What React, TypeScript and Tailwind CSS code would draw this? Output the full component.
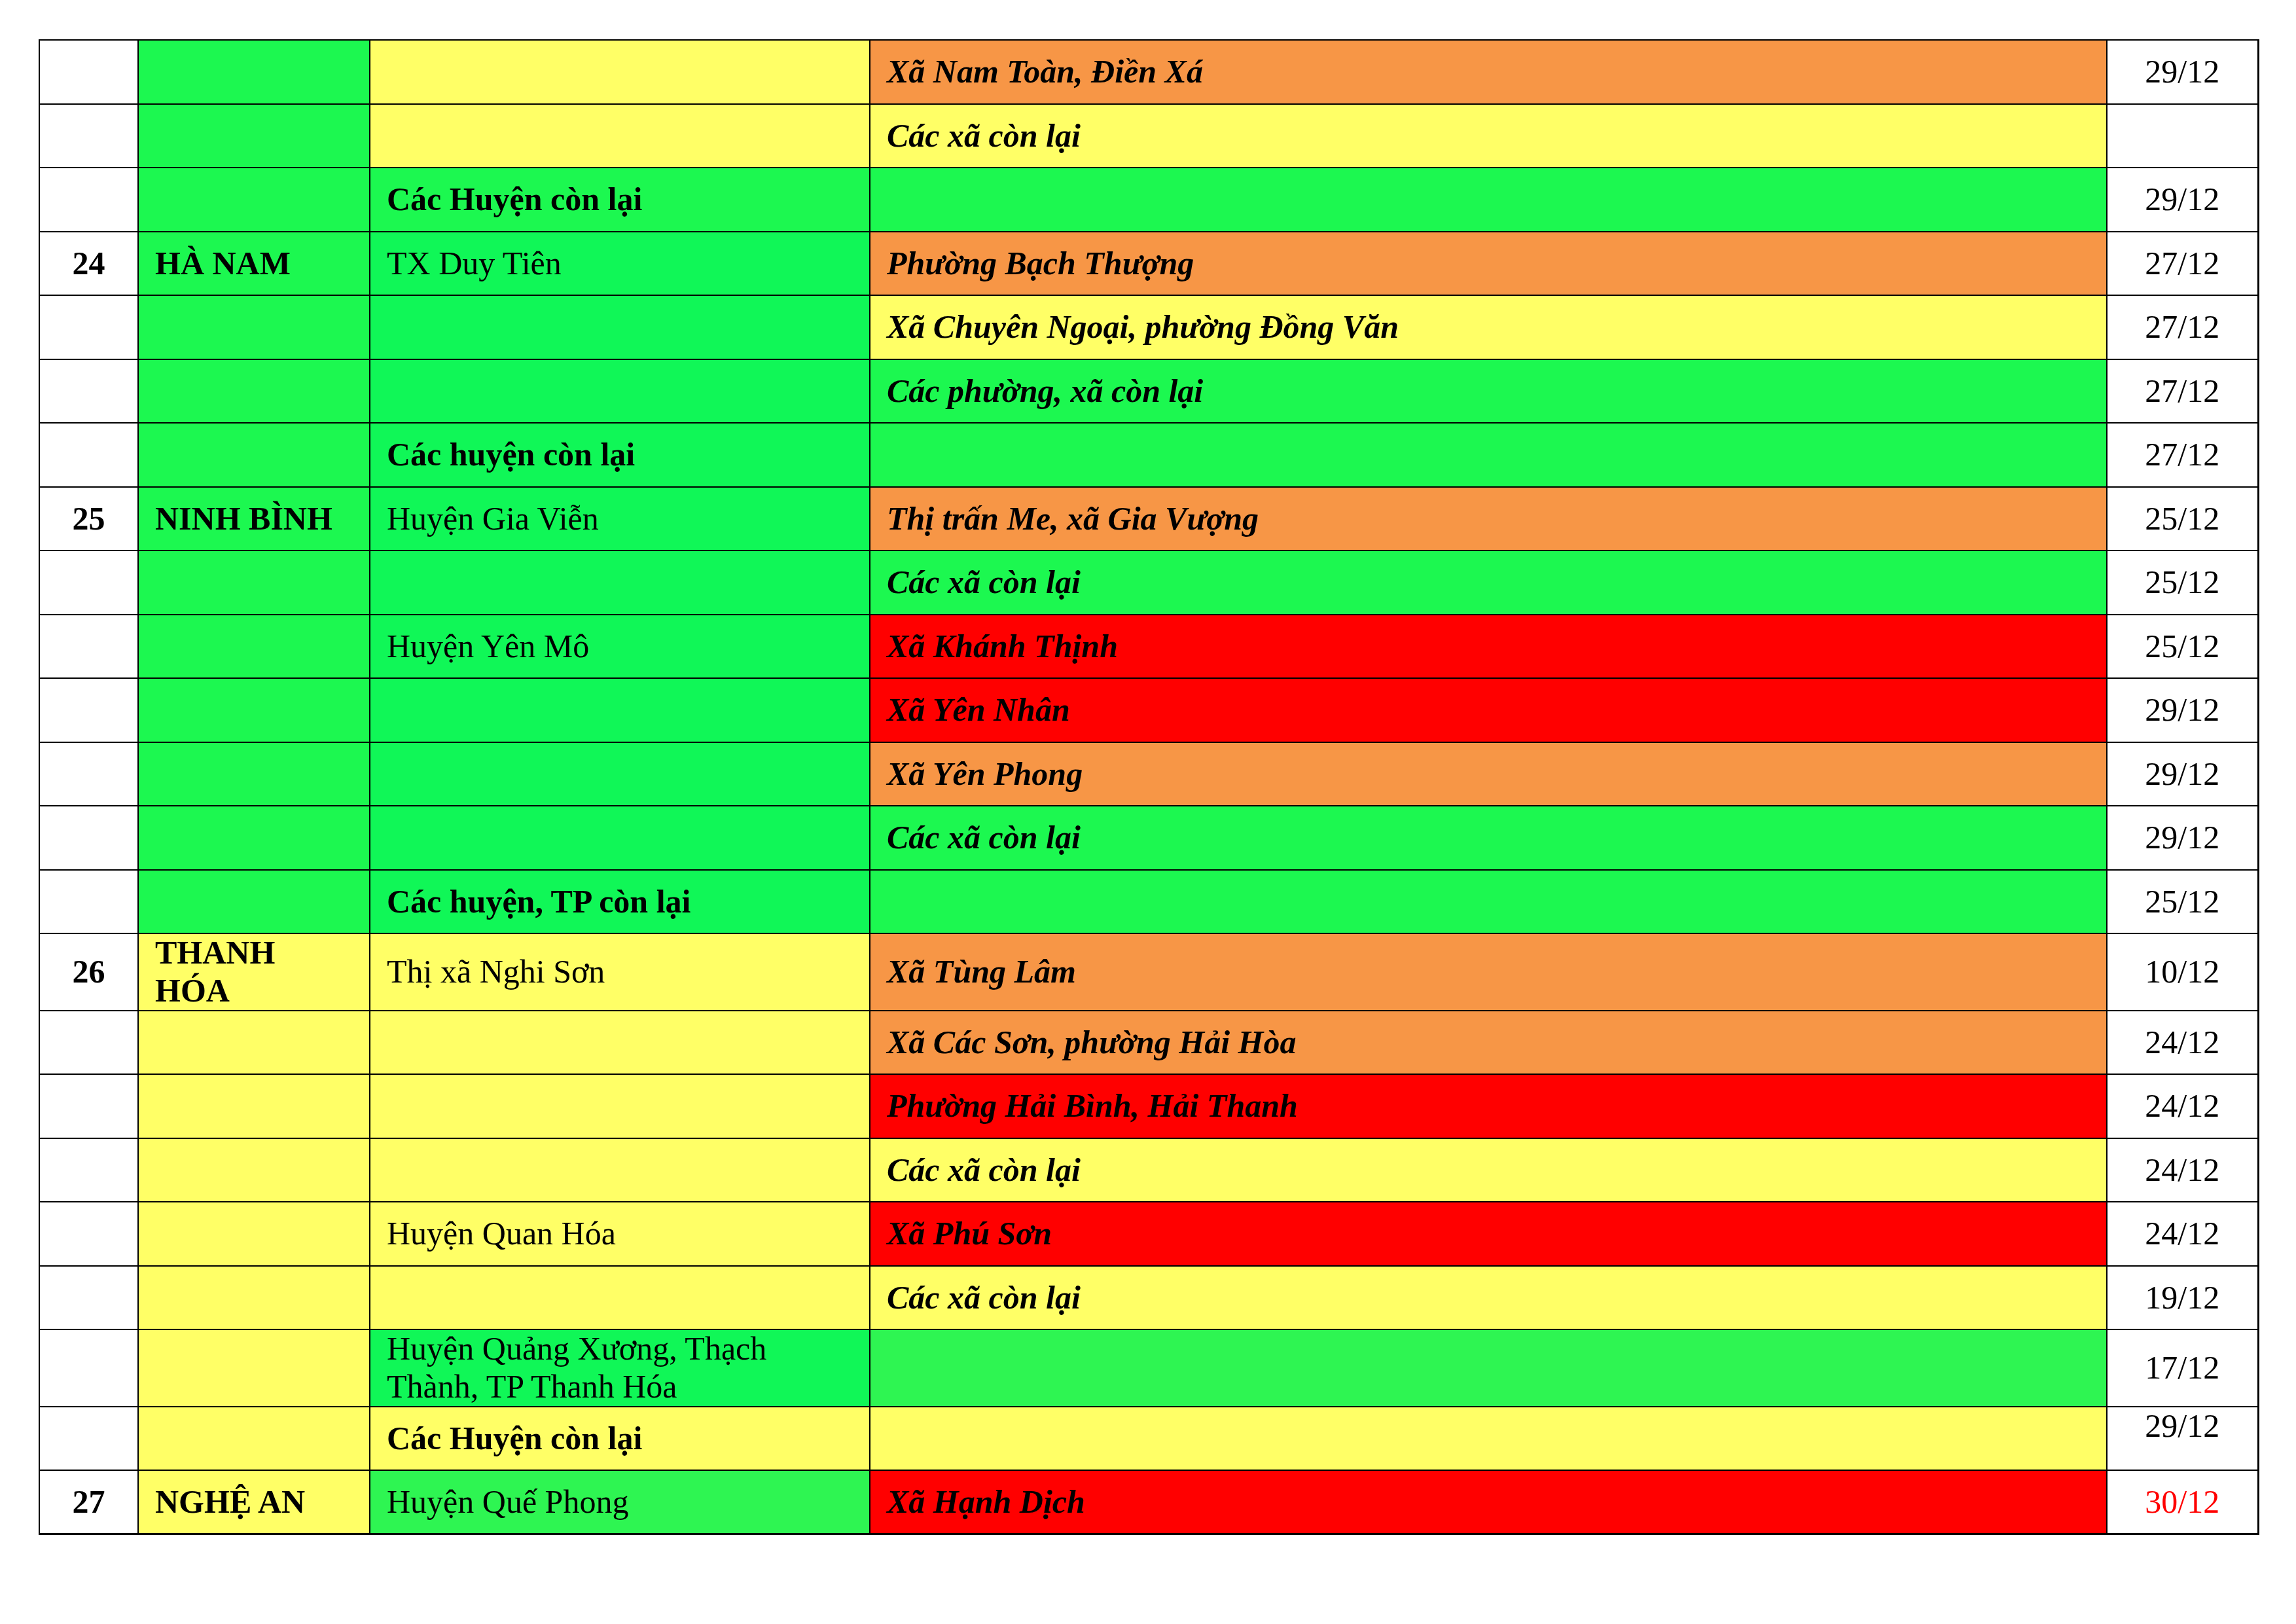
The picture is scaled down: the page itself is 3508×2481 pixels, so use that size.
import React from "react"

const G = "bg-[#1cf850]"
const G2 = "bg-[#10f757]"
const G3 = "bg-[#2ef552]"
const Y = "bg-[#ffff66]"
const O = "bg-[#f79646]"
const R = "bg-[#ff0000]"

type Row = {
  no?: string
  province?: string
  provinceBg: string
  district?: string
  districtBg: string
  districtBold?: boolean
  commune?: string
  communeBg: string
  date?: string
  dateTop?: boolean
  dateRed?: boolean
  tall?: boolean
}

const rows: Row[] = [
  { provinceBg: G, districtBg: Y, commune: "Xã Nam Toàn, Điền Xá", communeBg: O, date: "29/12" },
  { provinceBg: G, districtBg: Y, commune: "Các xã còn lại", communeBg: Y },
  { provinceBg: G, district: "Các Huyện còn lại", districtBold: true, districtBg: G, communeBg: G, date: "29/12" },
  { no: "24", province: "HÀ NAM", provinceBg: G, district: "TX Duy Tiên", districtBg: G2, commune: "Phường Bạch Thượng", communeBg: O, date: "27/12" },
  { provinceBg: G, districtBg: G2, commune: "Xã Chuyên Ngoại, phường Đồng Văn", communeBg: Y, date: "27/12" },
  { provinceBg: G, districtBg: G2, commune: "Các phường, xã còn lại", communeBg: G, date: "27/12" },
  { provinceBg: G, district: "Các huyện còn lại", districtBold: true, districtBg: G2, communeBg: G, date: "27/12" },
  { no: "25", province: "NINH BÌNH", provinceBg: G, district: "Huyện Gia Viễn", districtBg: G2, commune: "Thị trấn Me, xã Gia Vượng", communeBg: O, date: "25/12" },
  { provinceBg: G, districtBg: G2, commune: "Các xã còn lại", communeBg: G, date: "25/12" },
  { provinceBg: G, district: "Huyện Yên Mô", districtBg: G2, commune: "Xã Khánh Thịnh", communeBg: R, date: "25/12" },
  { provinceBg: G, districtBg: G2, commune: "Xã Yên Nhân", communeBg: R, date: "29/12" },
  { provinceBg: G, districtBg: G2, commune: "Xã Yên Phong", communeBg: O, date: "29/12" },
  { provinceBg: G, districtBg: G2, commune: "Các xã còn lại", communeBg: G, date: "29/12" },
  { provinceBg: G, district: "Các huyện, TP còn lại", districtBold: true, districtBg: G2, communeBg: G, date: "25/12" },
  { no: "26", province: "THANH HÓA", provinceBg: Y, district: "Thị xã Nghi Sơn", districtBg: Y, commune: "Xã Tùng Lâm", communeBg: O, date: "10/12", tall: true },
  { provinceBg: Y, districtBg: Y, commune: "Xã Các Sơn, phường Hải Hòa", communeBg: O, date: "24/12" },
  { provinceBg: Y, districtBg: Y, commune: "Phường Hải Bình, Hải Thanh", communeBg: R, date: "24/12" },
  { provinceBg: Y, districtBg: Y, commune: "Các xã còn lại", communeBg: Y, date: "24/12" },
  { provinceBg: Y, district: "Huyện Quan Hóa", districtBg: Y, commune: "Xã Phú Sơn", communeBg: R, date: "24/12" },
  { provinceBg: Y, districtBg: Y, commune: "Các xã còn lại", communeBg: Y, date: "19/12" },
  { provinceBg: Y, district: "Huyện Quảng Xương, Thạch Thành, TP Thanh Hóa", districtBg: G2, communeBg: G3, date: "17/12", tall: true },
  { provinceBg: Y, district: "Các Huyện còn lại", districtBold: true, districtBg: Y, communeBg: Y, date: "29/12", dateTop: true },
  { no: "27", province: "NGHỆ AN", provinceBg: Y, district: "Huyện Quế Phong", districtBg: G3, commune: "Xã Hạnh Dịch", communeBg: R, date: "30/12", dateRed: true },
]

const cell = "border-2 border-black align-middle"

export default function App() {
  return (
    <div className="min-h-screen bg-white pl-[59px] pt-[60px] text-black font-['Liberation_Serif','Times_New_Roman',serif] text-[50px] leading-[1.15]">
      <table className="w-[3390px] table-fixed border-collapse border-r-[3px] border-b-[3px] border-black">
        <colgroup>
          <col className="w-[151px]" />
          <col className="w-[354px]" />
          <col className="w-[764px]" />
          <col className="w-[1890px]" />
          <col className="w-[231px]" />
        </colgroup>
        <tbody>
          {rows.map((r, i) => (
            <tr key={i} className={r.tall ? "h-[117.5px]" : "h-[97.5px]"}>
              <td className={`${cell} bg-white text-center font-bold`}>{r.no}</td>
              <td className={`${cell} ${r.provinceBg} pl-[25px] pr-[24px] font-bold`}>{r.province}</td>
              <td className={`${cell} ${r.districtBg} pl-[25px] pr-2 ${r.districtBold ? "font-bold" : ""}`}>{r.district}</td>
              <td className={`${cell} ${r.communeBg} pl-[25px] pr-2 font-bold italic`}>{r.commune}</td>
              <td
                className={`border-2 border-black bg-white text-center ${r.dateTop ? "align-top" : "align-middle"} ${r.dateRed ? "text-[#ff0000]" : ""}`}
              >
                {r.date}
              </td>
            </tr>
          ))}
        </tbody>
      </table>
    </div>
  )
}
